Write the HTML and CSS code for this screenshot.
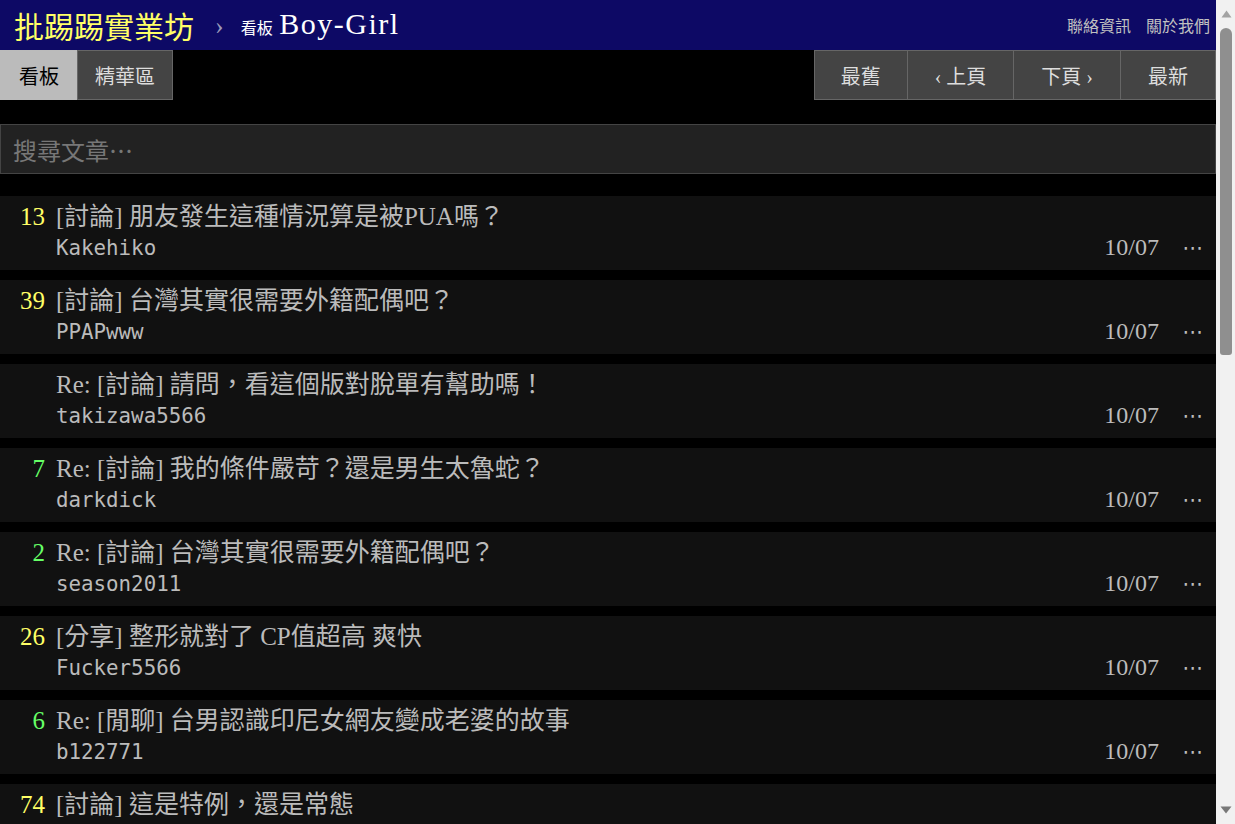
FILE: index.html
```html
<!DOCTYPE html>
<html lang="zh-Hant">
<head>
<meta charset="utf-8">
<title>看板 Boy-Girl 文章列表 - 批踢踢實業坊</title>
<link rel="stylesheet" href="styles.css">
</head>
<body>
<div class="page">
  <div class="topbar">
    <a class="logo" href="#">批踢踢實業坊</a>
    <span class="sep">›</span>
    <a class="board" href="#"><span class="board-label">看板 </span>Boy-Girl</a>
    <div class="right">
      <a href="#">聯絡資訊</a>
      <a href="#">關於我們</a>
    </div>
  </div>
  <div class="action-bar">
    <div class="btn-group left">
      <a class="btn selected" href="#">看板</a>
      <a class="btn" href="#">精華區</a>
    </div>
    <div class="btn-group paging">
      <a class="btn edge" href="#">最舊</a>
      <a class="btn wide" href="#">‹ 上頁</a>
      <a class="btn wide" href="#">下頁 ›</a>
      <a class="btn wide" href="#">最新</a>
    </div>
  </div>
  <div class="search-bar">
    <input class="query" type="text" placeholder="搜尋文章⋯">
  </div>
  <div class="r-list">
    <div class="r-ent">
      <div class="nrec y">13</div>
      <div class="body">
        <div class="title">[討論] 朋友發生這種情況算是被PUA嗎？</div>
        <div class="meta"><span class="author">Kakehiko</span><span class="date">10/07</span><span class="mark">⋯</span></div>
      </div>
    </div>
    <div class="r-ent">
      <div class="nrec y">39</div>
      <div class="body">
        <div class="title">[討論] 台灣其實很需要外籍配偶吧？</div>
        <div class="meta"><span class="author">PPAPwww</span><span class="date">10/07</span><span class="mark">⋯</span></div>
      </div>
    </div>
    <div class="r-ent">
      <div class="nrec"></div>
      <div class="body">
        <div class="title">Re: [討論] 請問，看這個版對脫單有幫助嗎！</div>
        <div class="meta"><span class="author">takizawa5566</span><span class="date">10/07</span><span class="mark">⋯</span></div>
      </div>
    </div>
    <div class="r-ent">
      <div class="nrec g">7</div>
      <div class="body">
        <div class="title">Re: [討論] 我的條件嚴苛？還是男生太魯蛇？</div>
        <div class="meta"><span class="author">darkdick</span><span class="date">10/07</span><span class="mark">⋯</span></div>
      </div>
    </div>
    <div class="r-ent">
      <div class="nrec g">2</div>
      <div class="body">
        <div class="title">Re: [討論] 台灣其實很需要外籍配偶吧？</div>
        <div class="meta"><span class="author">season2011</span><span class="date">10/07</span><span class="mark">⋯</span></div>
      </div>
    </div>
    <div class="r-ent">
      <div class="nrec y">26</div>
      <div class="body">
        <div class="title">[分享] 整形就對了 CP值超高 爽快</div>
        <div class="meta"><span class="author">Fucker5566</span><span class="date">10/07</span><span class="mark">⋯</span></div>
      </div>
    </div>
    <div class="r-ent">
      <div class="nrec g">6</div>
      <div class="body">
        <div class="title">Re: [閒聊] 台男認識印尼女網友變成老婆的故事</div>
        <div class="meta"><span class="author">b122771</span><span class="date">10/07</span><span class="mark">⋯</span></div>
      </div>
    </div>
    <div class="r-ent">
      <div class="nrec y">74</div>
      <div class="body">
        <div class="title">[討論] 這是特例，還是常態</div>
      </div>
    </div>
  </div>
</div>
<div class="scrollbar" aria-hidden="true">
  <svg class="arrow up" width="11" height="8" viewBox="0 0 11 8"><path d="M5.5 0.5 L10.5 7.5 L0.5 7.5 Z" fill="#a3a3a3"/></svg>
  <div class="thumb"></div>
  <svg class="arrow down" width="12" height="8" viewBox="0 0 12 8"><path d="M0.5 0.5 L11.5 0.5 L6 7.5 Z" fill="#787878"/></svg>
</div>
</body>
</html>
```

FILE: styles.css
```css
html, body {
  margin: 0;
  padding: 0;
  background: #000;
  color: #bbb;
  font-family: "Liberation Serif", "Noto Sans CJK TC", serif;
}
body {
  display: flex;
  height: 100vh;
  overflow: hidden;
}
a { text-decoration: none; color: inherit; }

.page {
  flex: 1;
  min-width: 0;
  overflow: hidden;
}

/* faux classic scrollbar */
.scrollbar {
  width: 19px;
  flex-shrink: 0;
  background: #f1f1f1;
  display: flex;
  flex-direction: column;
  align-items: center;
}
.arrow.up { margin: 10px 0 0 1px; }
.thumb {
  margin: 10px 0 0 1px;
  width: 12px;
  height: 327px;
  background: #8f8f8f;
  border-radius: 6px 6px 3px 3px;
}
.arrow.down { margin: auto 0 10px 1px; }

.topbar {
  height: 50px;
  background: #0d0965;
  display: flex;
  align-items: center;
  padding: 0 6px 0 14px;
}
.logo {
  color: #ffff66;
  font-family: "Noto Sans CJK TC", sans-serif;
  font-size: 30px;
  line-height: 50px;
}
.sep {
  color: #9a9ab8;
  font-size: 26px;
  margin: 2px 17px 0 21px;
}
.board {
  color: #fff;
  font-size: 30px;
  letter-spacing: 1.5px;
  line-height: 50px;
}
.board-label {
  font-family: "Noto Sans CJK TC", sans-serif;
  font-size: 16px;
  letter-spacing: 0;
  margin-right: 3px;
}
.right {
  margin-left: auto;
  display: flex;
  gap: 15px;
  font-family: "Noto Sans CJK TC", sans-serif;
  font-size: 16px;
  color: #c0c0c0;
}

.action-bar {
  display: flex;
  justify-content: space-between;
  height: 50px;
}
.btn-group { display: flex; }
.btn {
  display: flex;
  align-items: center;
  justify-content: center;
  height: 48px;
  padding: 0 17px;
  background: #444;
  color: #ddd;
  border: 1px solid #666;
  font-family: "Liberation Serif", "Noto Sans CJK TC", serif;
  font-size: 20px;
}
.btn + .btn { margin-left: -1px; }
.btn.selected {
  background: #bbb;
  color: #000;
  border-color: #bbb;
  padding: 0 18px;
}
.btn.edge { padding: 0 26px; }
.btn.wide { padding: 0 27px; }

.search-bar {
  margin: 24px 0 22px;
}
.query {
  display: block;
  box-sizing: border-box;
  width: 100%;
  height: 50px;
  margin: 0;
  padding: 0 12px;
  background: #222;
  border: 1px solid #444;
  color: #bbb;
  font-family: "Noto Sans CJK TC", sans-serif;
  font-size: 24px;
  outline: none;
}
.query::placeholder { color: #777; }

.r-list {
  display: flex;
  flex-direction: column;
  gap: 10px;
}
.r-ent {
  display: flex;
  background: #111;
  height: 74px;
  flex-shrink: 0;
  box-sizing: border-box;
  padding-top: 5px;
}
.nrec {
  width: 45px;
  text-align: right;
  font-size: 25px;
  line-height: 31px;
  flex-shrink: 0;
}
.nrec.y { color: #ffff66; }
.nrec.g { color: #66ff66; }
.body {
  flex: 1;
  padding-left: 11px;
}
.title {
  font-size: 25px;
  line-height: 31px;
  color: #bbb;
  white-space: nowrap;
}
.meta {
  display: flex;
  align-items: center;
  height: 31px;
}
.author {
  font-family: "DejaVu Sans Mono", monospace;
  font-size: 20.8px;
  color: #bbb;
  flex: 1;
}
.date {
  font-size: 24px;
  color: #bbb;
}
.mark {
  font-family: "DejaVu Sans", sans-serif;
  font-size: 21px;
  color: #bbb;
  width: 22px;
  margin: 0 12px 0 23px;
  text-align: center;
}
```
